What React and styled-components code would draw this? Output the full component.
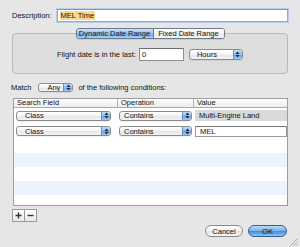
import React from "react";
import styled, { createGlobalStyle, css } from "styled-components";

const Global = createGlobalStyle`
  html, body { margin: 0; padding: 0; }
  body {
    width: 300px; height: 247px; overflow: hidden;
    background: #e6e6e6;
    font-family: "Liberation Sans", Arial, sans-serif;
    font-size: 7.5px; color: #111;
  }
  * { box-sizing: border-box; }
`;

const Window = styled.div`
  width: 300px; height: 247px;
  display: flex; flex-direction: column;
  padding: 9px 12px 0 12px;
  position: relative;
`;

const DescRow = styled.div`
  display: flex; align-items: center; gap: 5px;
  height: 13px;
`;

const Label = styled.span`
  white-space: nowrap;
  line-height: 10px;
`;

const TextField = styled.div`
  flex: ${p => (p.$grow ? 1 : "none")};
  width: ${p => (p.$w ? p.$w + "px" : "auto")};
  height: ${p => p.$h || 13}px;
  background: #fff;
  border: 1px solid ${p => (p.$focus ? "#8fa9cf" : "#8e8e8e")};
  border-top-color: ${p => (p.$focus ? "#7d98c2" : "#6e6e6e")};
  box-shadow: ${p => (p.$focus ? "0 0 0 1px #b9cde8" : "none")};
  display: flex; align-items: center;
  padding-left: 2px;
  line-height: 9px;
`;

const Selected = styled.span`
  background: #fad88c;
  padding: 0 1px;
  line-height: 9px;
`;

const TabGroup = styled.div`
  margin-top: 6px;
  display: flex; flex-direction: column; align-items: center;
`;

const Tabs = styled.div`
  display: flex;
  height: 11px;
  margin-bottom: -6px;
  z-index: 1;
  border: 1px solid #6f7a88;
  border-radius: 3px;
  overflow: hidden;
  box-shadow: 0 1px 0 rgba(0,0,0,0.08);
`;

const Tab = styled.div`
  width: ${p => p.$w}px;
  display: flex; align-items: center; justify-content: center;
  font-size: 7.5px; line-height: 9px;
  ${p => p.$active ? css`
    background: linear-gradient(#cfe3fa 0%, #8ebcee 50%, #6aa5e8 51%, #a9d0f7 100%);
    color: #0c1a2c;
  ` : css`
    background: linear-gradient(#ffffff 0%, #f1f1f1 50%, #e3e3e3 51%, #f6f6f6 100%);
    border-left: 1px solid #7b7b7b;
  `}
`;

const GroupBox = styled.div`
  align-self: stretch;
  height: 41px;
  border: 1px solid #b9b9b9;
  border-radius: 4px;
  background: #dedede;
  display: flex; align-items: center; justify-content: center;
  gap: 3px;
  padding-top: 2px;
`;

const Popup = styled.div`
  width: ${p => p.$w}px;
  height: ${p => p.$h || 11}px;
  border: 1px solid #8b8b8b;
  border-radius: 3px;
  background: linear-gradient(#ffffff 0%, #f3f3f3 50%, #e6e6e6 51%, #f4f4f4 100%);
  display: flex; align-items: stretch;
  margin-left: ${p => p.$ml || 0}px;
  overflow: hidden;
  box-shadow: 0 1px 0 rgba(0,0,0,0.06);
`;

const PopupText = styled.div`
  flex: 1;
  display: flex; align-items: center;
  padding-left: ${p => p.$pl || 8}px;
  line-height: 9px;
  white-space: nowrap;
`;

const Stepper = styled.div`
  width: 9px;
  border-left: 1px solid #6d8fbd;
  background: linear-gradient(#c4ddf8 0%, #8fbcee 50%, #5e9ee6 51%, #a4cdf6 100%);
  display: flex; align-items: center; justify-content: center;
`;

const Arrows = () => (
  <svg width="5" height="7" viewBox="0 0 5 7">
    <path d="M0.5 3 L2.5 0.5 L4.5 3 Z" fill="#1b2a3e" />
    <path d="M0.5 4 L2.5 6.5 L4.5 4 Z" fill="#1b2a3e" />
  </svg>
);

const MatchRow = styled.div`
  display: flex; align-items: center;
  margin-top: 9px;
  margin-left: -1px;
  height: 9px;
`;

const Table = styled.div`
  margin-top: 6px;
  margin-left: 1px;
  height: 108px;
  border: 1px solid #9d9d9d;
  background: #fff;
  display: flex; flex-direction: column;
  overflow: hidden;
`;

const HeaderRow = styled.div`
  display: grid;
  grid-template-columns: 103px 76px 1fr;
  height: 9px;
  background: linear-gradient(#ffffff, #ececec);
  border-bottom: 1px solid #a9a9a9;
`;

const HeaderCell = styled.div`
  padding-left: 3px;
  line-height: 8px;
  border-left: ${p => (p.$first ? "none" : "1px solid #b3b3b3")};
`;

const Row = styled.div`
  display: grid;
  grid-template-columns: 103px 76px 1fr;
  height: ${p => p.$h || 14}px;
  flex: none;
  background: ${p => (p.$alt ? "#edf3fe" : "#ffffff")};
  align-items: center;
`;

const Cell = styled.div`
  display: flex; align-items: center;
  padding-left: ${p => p.$pl || 2}px;
  padding-right: ${p => p.$pr || 0}px;
`;

const ValueBox = styled.div`
  flex: 1;
  height: 11px;
  display: flex; align-items: center;
  padding-left: 4px;
  line-height: 9px;
  white-space: nowrap;
  ${p => p.$readonly ? css`
    background: #d9d9d9;
  ` : css`
    background: #fff;
    border: 1px solid #9a9a9a;
    border-top-color: #777;
  `}
`;

const Fill = styled.div`
  flex: 1;
  background: #fff;
`;

const SmallButtons = styled.div`
  display: flex;
  margin-top: 3px;
  height: 13px;
`;

const SmallButton = styled.div`
  width: 13px; height: 13px;
  border: 1px solid #9a9a9a;
  margin-left: ${p => (p.$first ? 0 : -1)}px;
  background: linear-gradient(#ffffff, #e9e9e9);
  display: flex; align-items: center; justify-content: center;
`;

const Footer = styled.div`
  display: flex; justify-content: flex-end; gap: 5px;
  margin-top: 3px;
  margin-right: 1px;
`;

const PushButton = styled.div`
  width: ${p => p.$w}px; height: 12px;
  border-radius: 7px;
  display: flex; align-items: center; justify-content: center;
  line-height: 9px;
  ${p => p.$primary ? css`
    border: 1px solid #3a5e92;
    background: linear-gradient(#bcd9f8 0%, #7fb3ec 45%, #3f8ae0 52%, #8ec3f6 100%);
    color: #07162b;
  ` : css`
    border: 1px solid #8a8a8a;
    background: linear-gradient(#ffffff 0%, #f4f4f4 45%, #e2e2e2 52%, #f7f7f7 100%);
  `}
`;

const Grip = styled.svg`
  position: absolute;
  right: 2px; bottom: 1px;
`;

function PopupButton({ w, h, text, ml, pl }) {
  return (
    <Popup $w={w} $h={h} $ml={ml}>
      <PopupText $pl={pl}>{text}</PopupText>
      <Stepper><Arrows /></Stepper>
    </Popup>
  );
}

export default function App() {
  return (
    <>
      <Global />
      <Window>
        <DescRow>
          <Label>Description:</Label>
          <TextField $grow $focus>
            <Selected>MEL Time</Selected>
          </TextField>
        </DescRow>

        <TabGroup>
          <Tabs>
            <Tab $active $w={76}>Dynamic Date Range</Tab>
            <Tab $w={71}>Fixed Date Range</Tab>
          </Tabs>
          <GroupBox>
            <Label>Flight date is in the last:</Label>
            <TextField $w={45}>0</TextField>
            <PopupButton w={54} h={11} text="Hours" ml={2} pl={7} />
          </GroupBox>
        </TabGroup>

        <MatchRow>
          <Label>Match</Label>
          <PopupButton w={35} h={9} text="Any" ml={7} pl={8} />
          <Label style={{ marginLeft: 5 }}>of the following conditions:</Label>
        </MatchRow>

        <Table>
          <HeaderRow>
            <HeaderCell $first>Search Field</HeaderCell>
            <HeaderCell>Operation</HeaderCell>
            <HeaderCell>Value</HeaderCell>
          </HeaderRow>
          <Row $h={15}>
            <Cell $pl={2} $pr={5}><PopupButton w={95} h={10} text="Class" /></Cell>
            <Cell $pl={2} $pr={1}><PopupButton w={73} h={10} text="Contains" pl={4} /></Cell>
            <Cell $pl={0}><ValueBox $readonly>Multi-Engine Land</ValueBox></Cell>
          </Row>
          <Row $h={16} $alt={false}>
            <Cell $pl={2} $pr={5}><PopupButton w={95} h={10} text="Class" /></Cell>
            <Cell $pl={2} $pr={1}><PopupButton w={73} h={10} text="Contains" pl={4} /></Cell>
            <Cell $pl={0}><ValueBox>MEL</ValueBox></Cell>
          </Row>
          <Row $alt={false} />
          <Row $alt />
          <Row />
          <Row $alt />
          <Fill />
        </Table>

        <SmallButtons>
          <SmallButton $first>
            <svg width="7" height="7" viewBox="0 0 7 7"><path d="M3.5 0.5v6M0.5 3.5h6" stroke="#333" strokeWidth="1.4" /></svg>
          </SmallButton>
          <SmallButton>
            <svg width="7" height="7" viewBox="0 0 7 7"><path d="M0.5 3.5h6" stroke="#333" strokeWidth="1.4" /></svg>
          </SmallButton>
        </SmallButtons>

        <Footer>
          <PushButton $w={38}>Cancel</PushButton>
          <PushButton $w={39} $primary>OK</PushButton>
        </Footer>

        <Grip width="8" height="8" viewBox="0 0 8 8">
          <path d="M7.5 0.5 L0.5 7.5 M7.5 3.5 L3.5 7.5 M7.5 6 L6 7.5" stroke="#9a9a9a" strokeWidth="0.8" />
        </Grip>
      </Window>
    </>
  );
}
